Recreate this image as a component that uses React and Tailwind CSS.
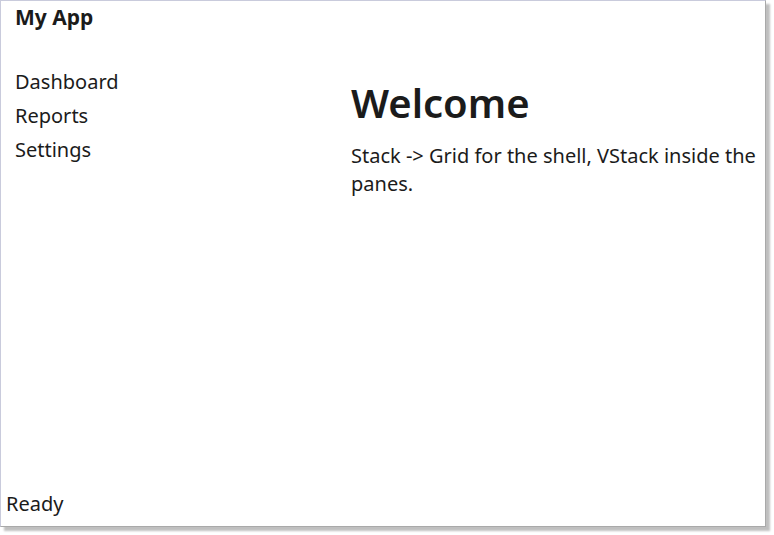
export default function App() {
  return (
    <div className="w-[774px] h-[535px] bg-white relative" style={{ fontFamily: '"Noto Sans", sans-serif' }}>
      <div className="w-[766px] h-[527px] bg-white border border-[#c9cbdc] border-r-[#a9a9a9] border-b-[#a9a9a9] shadow-[4px_4px_2px_rgba(0,0,0,0.25)] flex flex-col text-[#1b1b1b]">
        <div className="pl-[14px] pt-[1px] h-[30px] text-[21px] leading-[30px] font-bold">My App</div>
        <div className="flex flex-1">
          <div className="w-[350px] shrink-0 pl-[14px] pt-[34px] flex flex-col text-[20px] leading-[34px]">
            <div>Dashboard</div>
            <div>Reports</div>
            <div>Settings</div>
          </div>
          <div className="flex-1 pt-[46px] pr-[8px] flex flex-col">
            <div className="text-[40px] leading-[52px] font-semibold">Welcome</div>
            <div className="mt-[13px] text-[20px] leading-[28px]">Stack -&gt; Grid for the shell, VStack inside the panes.</div>
          </div>
        </div>
        <div className="pl-[5px] h-[36px] text-[20px] leading-[28px]">Ready</div>
      </div>
    </div>
  );
}
